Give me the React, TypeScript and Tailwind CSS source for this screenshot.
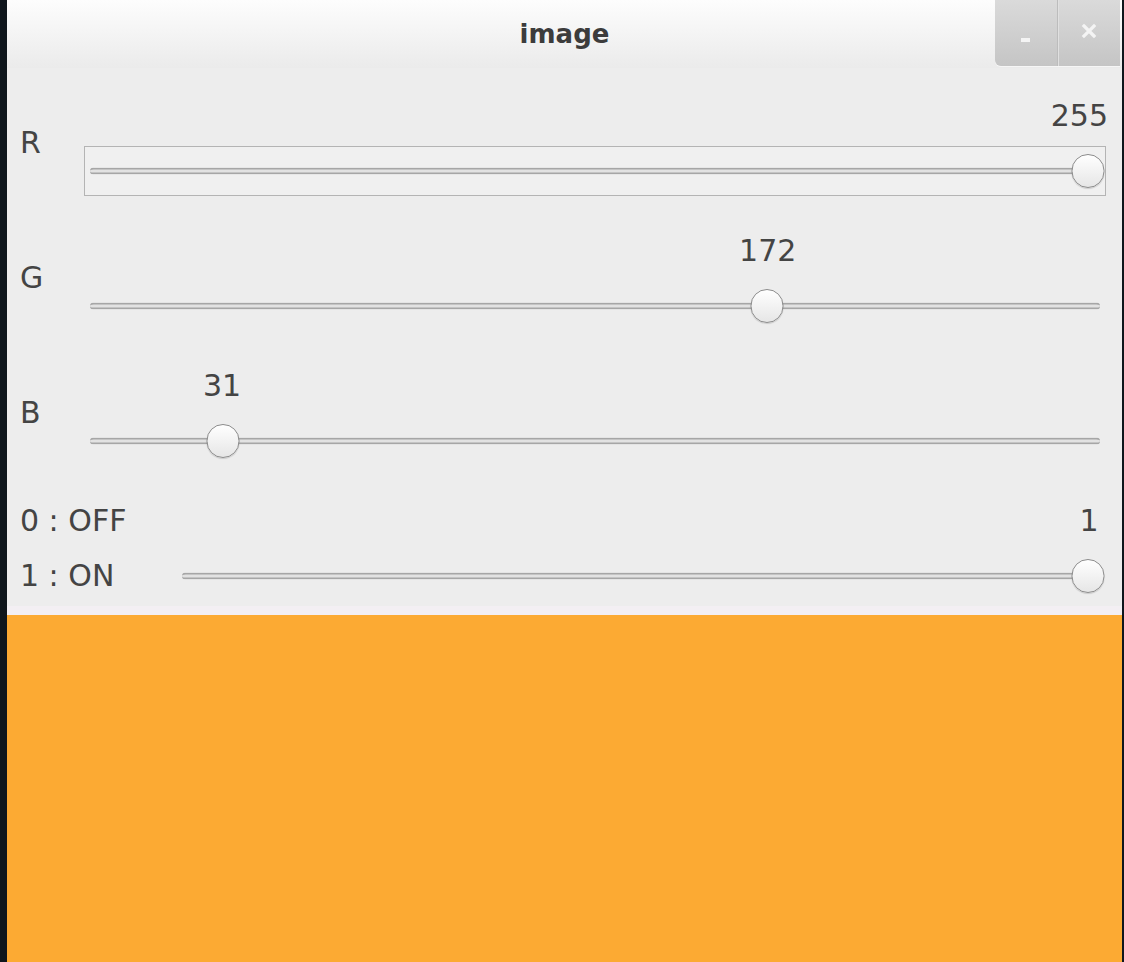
import React from 'react';

type TrackbarProps = {
  value: number;
  max: number;
  label: React.ReactNode;
  labelWidth: string;
  focused?: boolean;
  height: string;
};

function Thumb({ left }: { left: string }) {
  return (
    <div
      className="absolute top-1/2 h-[34px] w-[33px] -translate-x-1/2 -translate-y-1/2 rounded-full border border-[#8c8c8c] bg-gradient-to-b from-white to-[#e6e6e6] shadow-[0_1px_1px_rgba(0,0,0,0.15)]"
      style={{ left }}
    />
  );
}

function Trackbar({ value, max, label, labelWidth, focused, height }: TrackbarProps) {
  const frac = value / max;
  // thumb centre: 18px inset on the left, 17px on the right
  const center = `calc(18px + (100% - 35px) * ${frac})`;
  const text = String(value);
  const pinRight = frac === 1 && text.length > 1;

  return (
    <div className={`flex ${height}`}>
      <div className={`${labelWidth} shrink-0 pl-[13px]`}>{label}</div>
      <div className="flex-1 pr-[16px] pt-[33px]">
        {/* value above the thumb */}
        <div className="relative h-[30px] text-[30px] leading-[30px]">
          <span
            className={`absolute top-0 ${pinRight ? 'right-[-2px]' : '-translate-x-1/2'}`}
            style={pinRight ? undefined : { left: center }}
          >
            {text}
          </span>
        </div>
        <div
          className={`relative mt-[15px] h-[50px] ${
            focused ? 'border border-[#b4b4b4] bg-[#f0f0f0]' : 'border border-transparent'
          }`}
        >
          <div className="absolute left-[5px] right-[5px] top-1/2 h-[7px] -translate-y-1/2 rounded-full border-y-2 border-[#a6a6a6] bg-[#e2e2e2]" />
          <Thumb left={center} />
        </div>
      </div>
    </div>
  );
}

function TitleBar() {
  return (
    <div className="relative flex h-[68px] shrink-0 items-center justify-center bg-gradient-to-b from-[#fdfdfd] to-[#ebebeb]">
      <span className="text-[26px] font-bold leading-none text-[#3c3c3c]">image</span>
      <div className="absolute right-[2px] top-0 flex h-[66px] w-[125px] overflow-hidden rounded-bl-[6px] bg-gradient-to-b from-[#dadada] to-[#c5c5c5] shadow-[0_1px_0_#f6f6f6]">
        <div className="flex flex-1 items-end justify-center pb-[24px]">
          <span className="h-[4px] w-[9px] bg-[#f4f4f4]" />
        </div>
        <div className="w-[1px] bg-[#bcbcbc]" />
        <div className="w-[1px] bg-[#e0e0e0]" />
        <div className="flex flex-1 items-center justify-center pb-[4px]">
          <svg width="16" height="16" viewBox="0 0 16 16">
            <path d="M3 3 L13 13 M13 3 L3 13" stroke="#f4f4f4" strokeWidth="3.2" strokeLinecap="square" />
          </svg>
        </div>
      </div>
    </div>
  );
}

export default function App() {
  const channels = [
    { label: 'R', value: 255, focused: true },
    { label: 'G', value: 172 },
    { label: 'B', value: 31 },
  ];

  return (
    <div
      className="flex h-[962px] w-full overflow-hidden bg-[#111820] text-[#444444]"
      style={{ fontFamily: '"DejaVu Sans", "Liberation Sans", sans-serif' }}
    >
      <div className="w-[7px] shrink-0 bg-[#0f161c]" />
      <div className="flex min-w-0 flex-1 flex-col bg-[#ededed]">
        <TitleBar />

        {channels.map((c) => (
          <Trackbar
            key={c.label}
            value={c.value}
            max={255}
            focused={c.focused}
            height="h-[135px]"
            labelWidth="w-[77px]"
            label={<div className="pt-[60px] text-[30px] leading-[30px]">{c.label}</div>}
          />
        ))}

        <Trackbar
          value={1}
          max={1}
          height="h-[133px]"
          labelWidth="w-[169px]"
          label={
            <div className="pt-[33px] text-[30px] leading-[30px]">
              <div>0 : OFF</div>
              <div className="mt-[25px]">1 : ON</div>
            </div>
          }
        />

        <div className="h-[9px] shrink-0 bg-[#f3eff3]" />
        <div className="flex-1 bg-[#fcaa33]" />
      </div>
      <div className="w-[2px] shrink-0 bg-[#0f161c]" />
    </div>
  );
}
